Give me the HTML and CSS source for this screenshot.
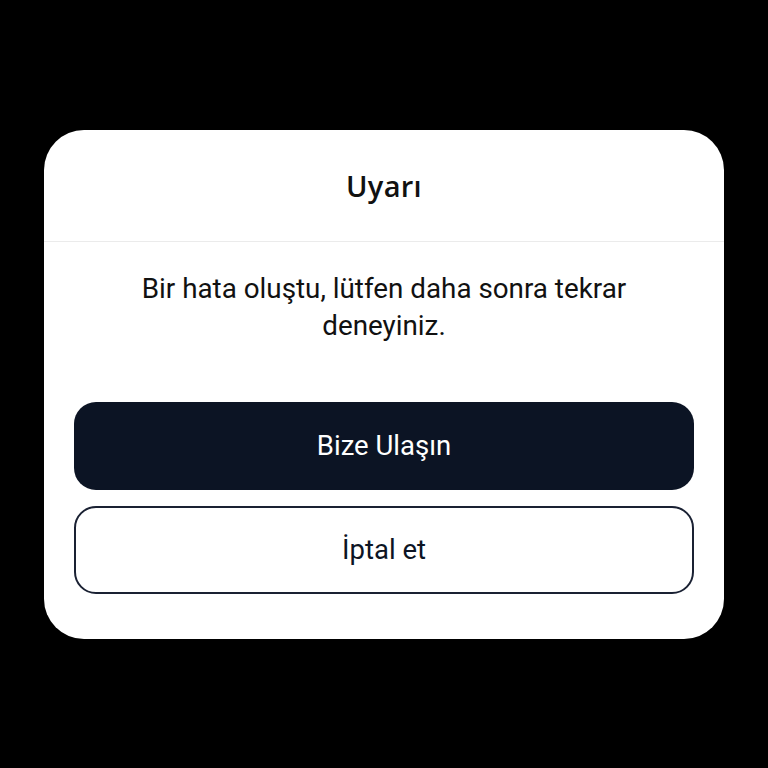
FILE: index.html
```html
<!DOCTYPE html>
<html lang="tr">
<head>
<meta charset="utf-8">
<link rel="stylesheet" href="styles.css">
</head>
<body>
<div class="dialog">
  <div class="dialog-header">
    <h1 class="dialog-title">Uyarı</h1>
  </div>
  <div class="dialog-body">
    <p class="dialog-message">Bir hata oluştu, lütfen daha sonra tekrar deneyiniz.</p>
    <div class="dialog-actions">
      <button class="btn btn-primary">Bize Ulaşın</button>
      <button class="btn btn-outline">İptal et</button>
    </div>
  </div>
</div>
</body>
</html>
```

FILE: styles.css
```css
html, body {
  margin: 0;
  padding: 0;
  background: #000;
  height: 100%;
}
body {
  padding-top: 130px;
  box-sizing: border-box;
  font-family: Roboto, "Liberation Sans", sans-serif;
}
.dialog {
  width: 680px;
  margin-left: 44px;
  background: #fff;
  border-radius: 40px;
  overflow: hidden;
}
.dialog-header {
  height: 112px;
  border-bottom: 1px solid #ebebeb;
  display: flex;
  align-items: center;
  justify-content: center;
  box-sizing: border-box;
}
.dialog-title {
  margin: 0;
  font-family: "Open Sans", Lato, sans-serif;
  font-weight: 600;
  font-size: 29px;
  letter-spacing: 0.3px;
  line-height: 36px;
  color: #111;
  padding-top: 0;
}
.dialog-body {
  padding: 28px 30px 45px;
}
.dialog-message {
  margin: 0 0 58px;
  text-align: center;
  font-size: 27.8px;
  line-height: 37px;
  color: #111;
  padding: 0 50px;
}
.dialog-actions {
  display: flex;
  flex-direction: column;
  gap: 16px;
}
.btn {
  height: 88px;
  border-radius: 22px;
  font-family: Roboto, "Liberation Sans", sans-serif;
  font-size: 27.5px;
  line-height: 32px;
  cursor: pointer;
}
.btn-primary {
  background: #0c1424;
  color: #fff;
  border: none;
}
.btn-outline {
  background: #fff;
  color: #0c1424;
  border: 2px solid #1a2133;
}
```
